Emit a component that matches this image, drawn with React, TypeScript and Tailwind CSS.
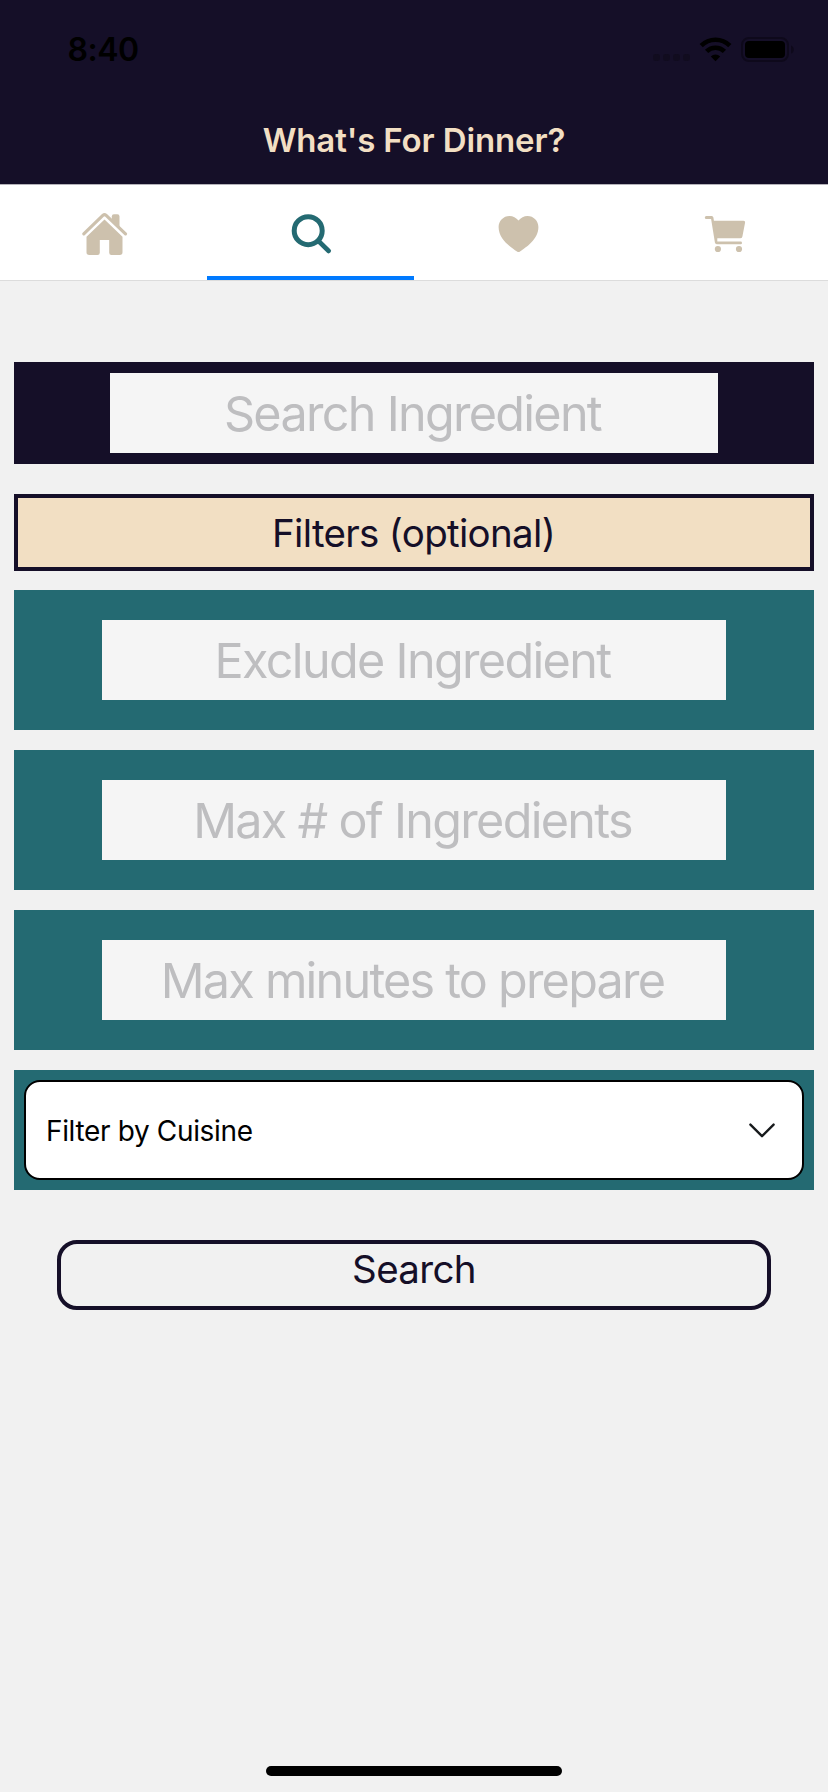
import React from "react";

function StatusIcons() {
  return (
    <svg className="h-[60px] w-[188px]" viewBox="640 20 188 60" fill="none">
      <g fill="#110c1f">
        <rect x="653" y="54" width="7" height="7" rx="2.4" />
        <rect x="663" y="54" width="7" height="7" rx="2.4" />
        <rect x="673" y="54" width="7" height="7" rx="2.4" />
        <rect x="683" y="54" width="7" height="7" rx="2.4" />
      </g>
      <g stroke="#000" strokeWidth="4.6">
        <path d="M701.2 45.6a20.3 20.3 0 0 1 28.6 0" />
        <path d="M706.6 51.4a12.6 12.6 0 0 1 17.8 0" />
      </g>
      <path d="M715.5 61.2l-4.7-4.8a6.8 6.8 0 0 1 9.4 0z" fill="#000" />
      <rect x="742" y="38" width="46" height="23" rx="7" stroke="#0e091b" strokeWidth="2" />
      <rect x="745" y="41" width="40" height="17" rx="4" fill="#000" />
      <path d="M791 45.4c3.8 1.6 3.8 6.6 0 8.2z" fill="#0e091b" />
    </svg>
  );
}

function HomeIcon() {
  return (
    <svg className="size-[60px]" viewBox="73.5 202 60 60" fill="#cdc1ad">
      <path d="M111.3 216.4q0-2.1 2.1-2.1h3.5q2.1 0 2.1 2.1v11.8l-7.7-7.2z" />
      <path
        d="M83.3 233.8L102.6 215.2Q104 214 105.4 215.2L125 233.8"
        fill="none"
        stroke="#cdc1ad"
        strokeWidth="3.2"
        strokeLinecap="round"
      />
      <path d="M104 219.4L122 236.8V252.3q0 2.7-2.7 2.7H111q-2.3 0-2.3-2.3V240H99.3v12.7q0 2.3-2.3 2.3H88.7q-2.7 0-2.7-2.7V236.8z" />
    </svg>
  );
}

function SearchIcon() {
  return (
    <svg className="size-[60px]" viewBox="280.5 202 60 60" fill="none" stroke="#246a72" strokeLinecap="round">
      <circle cx="307.7" cy="230.7" r="14" strokeWidth="5" />
      <path d="M318.5 241.5L328.2 251" strokeWidth="4.6" />
    </svg>
  );
}

function HeartIcon() {
  return (
    <svg className="size-[60px]" viewBox="487.5 202 60 60" fill="#cdc1ad">
      <path d="M518 220.6C520.2 217.6 523.6 215.9 527 215.9C533.1 215.9 537.9 220.8 537.9 227C537.9 239.4 525.6 247.2 519.5 251.5Q518 252.5 516.5 251.5C510.4 247.2 498.1 239.4 498.1 227C498.1 220.8 502.9 215.9 509 215.9C512.4 215.9 515.8 217.6 518 220.6Z" />
    </svg>
  );
}

function CartIcon() {
  return (
    <svg className="size-[60px]" viewBox="694.5 202 60 60" fill="#cdc1ad">
      <path d="M705.8 216H711.2Q712.7 216 712.9 217.5L713.4 220.7H743Q744.9 220.7 744.6 222.6L741.9 236.4Q741.5 238.3 739.6 238.3H716.8V241.6H740.2Q741.5 241.6 741.5 242.9Q741.5 244.2 740.2 244.2H716.3Q714.7 244.2 714.4 242.6L710.6 219H705.8Q704.3 219 704.3 217.5Q704.3 216 705.8 216Z" />
      <circle cx="717.4" cy="249" r="3.1" />
      <circle cx="738.5" cy="249" r="3.1" />
    </svg>
  );
}

function Tab({ active, children }: { active?: boolean; children: React.ReactNode }) {
  return (
    <button
      className={
        active
          ? "flex flex-1 items-start justify-center border-b-4 border-[#007aff] pt-[17px]"
          : "flex flex-1 items-start justify-center border-b-4 border-white pt-[17px]"
      }
    >
      {children}
    </button>
  );
}

function Field({ label, spacing }: { label: string; spacing: string }) {
  return (
    <div className="flex h-[140px] items-center justify-center bg-[#246a72]">
      <div
        className={`flex h-20 w-[624px] items-center justify-center bg-[#f5f5f5] pt-0.5 pr-[3px] text-[48.5px] leading-none whitespace-nowrap text-[#bebec0] ${spacing}`}
      >
        {label}
      </div>
    </div>
  );
}

export default function App() {
  return (
    <div className="flex h-[1792px] w-[828px] flex-col bg-[#f1f1f1] font-['Inter','Liberation_Sans',sans-serif]">
      <header className="flex h-[184px] flex-col bg-[#150f28]">
        <div className="flex h-24 items-start justify-between">
          <div className="mt-[33px] ml-[67.5px] text-[32px] leading-[33px] font-semibold tracking-[-0.5px] text-black">
            8:40
          </div>
          <div className="mt-5">
            <StatusIcons />
          </div>
        </div>
        <h1 className="h-[88px] text-center text-[33px] leading-[88px] font-semibold tracking-[-0.12px] text-[#f2dfc3]">
          What's For Dinner?
        </h1>
      </header>

      <nav className="flex h-[97px] border-t border-b border-t-[#b4b2b9] border-b-[#dcdcdc] bg-white">
        <Tab>
          <HomeIcon />
        </Tab>
        <Tab active>
          <SearchIcon />
        </Tab>
        <Tab>
          <HeartIcon />
        </Tab>
        <Tab>
          <CartIcon />
        </Tab>
      </nav>

      <main className="flex flex-1 flex-col px-3.5 pt-[81px]">
        <div className="flex h-[102px] items-center justify-center bg-[#150f28]">
          <div className="flex h-20 w-[608px] items-center justify-center bg-[#f5f5f5] pt-0.5 pr-[3px] text-[48.5px] leading-none tracking-[-1.7px] whitespace-nowrap text-[#bebec0]">
            Search Ingredient
          </div>
        </div>

        <button className="mt-[30px] flex h-[77px] items-center justify-center border-4 border-[#150f28] bg-[#f2dfc3] pt-0.5 pr-px text-[38.5px] leading-none tracking-[-0.68px] text-[#150f28]">
          Filters (optional)
        </button>

        <div className="mt-[19px] flex flex-col gap-5">
          <Field label="Exclude Ingredient" spacing="tracking-[-1.66px]" />
          <Field label="Max # of Ingredients" spacing="tracking-[-1.7px]" />
          <Field label="Max minutes to prepare" spacing="tracking-[-1.77px]" />
          <div className="h-[120px] bg-[#246a72] p-2.5">
            <button className="flex h-[100px] w-full items-center justify-between rounded-2xl border-2 border-black bg-white pr-6 pl-5 text-[28px] leading-none tracking-[-0.35px] text-black">
              <span className="pt-px">Filter by Cuisine</span>
              <svg className="h-5 w-8" viewBox="0 0 32 20" fill="none" stroke="#171a1c" strokeWidth="2.4" strokeLinecap="round" strokeLinejoin="round">
                <path d="M4.4 4.6L16 16.2L27.6 4.6" />
              </svg>
            </button>
          </div>
        </div>

        <button className="mx-[43px] mt-[50px] flex h-[70px] items-start justify-center rounded-[20px] border-4 border-[#150f28] text-[38.5px] leading-[50px] tracking-[-0.66px] text-[#150f28]">
          Search
        </button>
      </main>

      <div className="flex h-[26px] justify-center">
        <div className="h-2.5 w-[296px] rounded-full bg-black" />
      </div>
    </div>
  );
}
